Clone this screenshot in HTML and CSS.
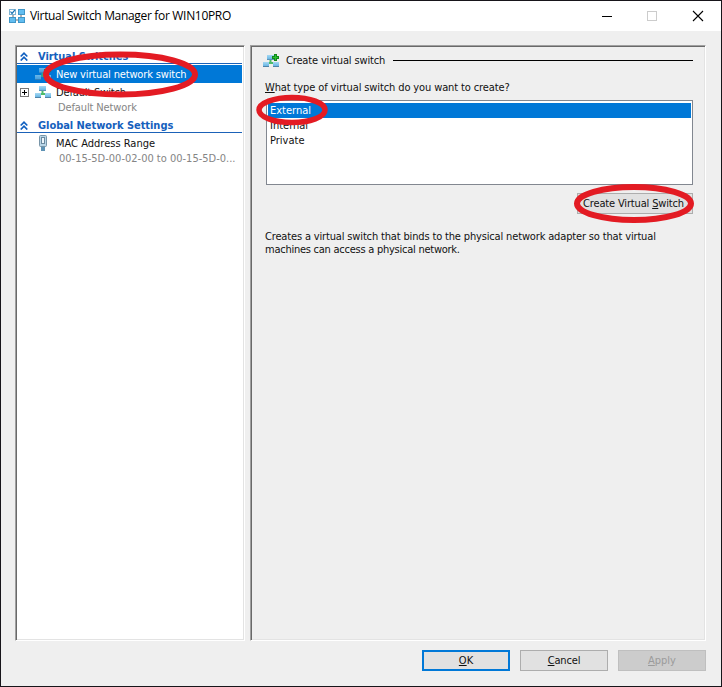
FILE: index.html
```
<!DOCTYPE html>
<html lang="en">
<head>
<meta charset="utf-8">
<title>Virtual Switch Manager for WIN10PRO</title>
<link rel="stylesheet" href="styles.css">
</head>
<body>
<svg class="defs" width="0" height="0">
  <defs>
    <linearGradient id="sky" x2="0" y2="1"><stop offset="0" stop-color="#a5d8f3"/><stop offset="1" stop-color="#5aaee0"/></linearGradient>
    <g id="net">
      <path d="M7.500 5V9M4 9H12" fill="none" stroke="#4dbb6a" stroke-width="2"/>
      <rect x="4" y="1" width="7" height="5" fill="url(#sky)"/>
      <path d="M4 5.500H11" stroke="#5b93b8"/>
      <rect x="0" y="8" width="6" height="5" fill="url(#sky)"/>
      <rect x="10" y="8" width="6" height="5" fill="url(#sky)"/>
      <path d="M0 12.500H6M10 12.500H16" stroke="#4f83a8"/>
      <path d="M6 9H10" stroke="#4dbb6a" stroke-width="2"/>
    </g>
    <g id="plus"><path d="M12.500 0V7M9 3.500H16" stroke="#13891b" stroke-width="3"/><path d="M12.500 1V6M10 3.500H15" stroke="#2cc032" stroke-width="1"/></g>
    <path id="chev" d="M.7 4.500L4 1.200L7.300 4.500M.7 8.500L4 5.200L7.300 8.500" fill="none" stroke="#0f5fc0" stroke-width="1.700"/>
  </defs>
</svg>
<div class="window">
  <header class="titlebar">
    <svg class="app-icon" width="17" height="15" viewBox="0 0 17 15">
      <path d="M4 5V11H12V5" fill="none" stroke="#666"/>
      <rect x=".5" y=".5" width="6" height="5" fill="#fff" stroke="#7fb4d4"/>
      <path d="M1.500 2.500L3 4.500L6 .8" fill="none" stroke="#1673b5" stroke-width="1.200"/>
      <g fill="#62bdf0" stroke="#3f96c8"><rect x="9.500" y=".5" width="6" height="5"/><rect x=".5" y="8.500" width="6" height="5"/><rect x="9.500" y="8.500" width="6" height="5"/></g>
    </svg>
    <h1 class="title">Virtual Switch Manager for WIN10PRO</h1>
    <svg class="controls" width="106" height="12" viewBox="0 0 106 12" fill="none">
      <path d="M0 6.500H10" stroke="#000"/><rect x="45.500" y="1.500" width="9" height="9" stroke="#ccc"/><path d="M91 1L101 11M101 1L91 11" stroke="#000" stroke-width="1.100"/>
    </svg>
  </header>
  <main class="panes">
    <nav class="pane tree">
      <div class="group"><svg width="8" height="9"><use href="#chev"/></svg><span>Virtual Switches</span></div>
      <div class="row selected"><span class="toggle"></span><svg class="dim" width="16" height="14"><use href="#net"/><use href="#plus"/></svg><span class="tight">New virtual network switch</span></div>
      <div class="row"><span class="toggle"><svg width="9" height="9"><rect x=".5" y=".5" width="8" height="8" fill="#fff" stroke="#777"/><path d="M2 4.500H7M4.500 2V7" stroke="#000"/></svg></span><svg width="16" height="14"><use href="#net"/></svg><span class="tight">Default Switch</span></div>
      <div class="detail snug">Default Network</div>
      <div class="group second"><svg width="8" height="9"><use href="#chev"/></svg><span>Global Network Settings</span></div>
      <div class="row"><span class="toggle"></span><svg width="16" height="16"><path d="M8 12V16" stroke="#5f93b5" stroke-width="4"/><rect x="4.500" y=".5" width="7" height="11" rx="1" fill="#b9d5e6" stroke="#7895a8"/><rect x="6.500" y="2.500" width="3" height="6" fill="#eef6fb" stroke="#6b8a9f"/></svg><span>MAC Address Range</span></div>
      <div class="detail addr">00-15-5D-00-02-00 to 00-15-5D-0...</div>
    </nav>
    <section class="pane content">
      <div class="heading"><svg width="17" height="14"><use href="#net"/><use href="#plus"/></svg><span class="tight">Create virtual switch</span><i></i></div>
      <p class="question"><span class="snug"><u>W</u>hat type of virtual switch do you want to create?</span></p>
      <ul class="list"><li class="selected"><span>External</span></li><li><span>Internal</span></li><li><span>Private</span></li></ul>
      <button class="btn create"><span class="tight">Create Virtual <u>S</u>witch</span></button>
      <p class="desc"><span class="tight">Creates a virtual switch that binds to the physical network adapter so that virtual</span><br><span class="tighter">machines can access a physical network.</span></p>
    </section>
  </main>
  <footer class="actions"><button class="btn ok"><span><u>O</u>K</span></button><button class="btn"><span class="tight"><u>C</u>ancel</span></button><button class="btn off" disabled><span><u>A</u>pply</span></button></footer>
</div>
<svg class="marks" width="722" height="687" fill="none" stroke="#e31b23" stroke-width="6">
  <ellipse cx="120.500" cy="74.500" rx="74.500" ry="20"/>
  <ellipse cx="292" cy="110" rx="33" ry="12.500" stroke-width="5.500"/>
  <ellipse cx="634" cy="203.500" rx="57" ry="16.500"/>
</svg>
</body>
</html>
```
FILE: styles.css
```
* { box-sizing: border-box; }
body { margin: 0; font: 11px/13px "DejaVu Sans Condensed", "DejaVu Sans", sans-serif; font-stretch: condensed; color: #111; }
.defs { position: absolute; }
p, ul, h1 { margin: 0; padding: 0; }
span { white-space: nowrap; }
u { text-underline-offset: 1px; }
.snug { letter-spacing: -.12px; }
.tight { letter-spacing: -.155px; }
.tighter { letter-spacing: -.25px; }
.window { width: 722px; height: 687px; border: 1px solid #17151a; background: #efefef; display: flex; flex-direction: column; }
.titlebar { height: 30px; background: #fff; display: flex; align-items: center; padding: 0 16px 0 8px; flex: none; }
.title { font: 12px/16px "Open Sans", sans-serif; letter-spacing: -.32px; margin-left: 4px; color: #000; }
.controls { margin-left: auto; margin-right: -3px; }
.panes { display: flex; gap: 5px; padding: 14px 15px 0 14px; height: 610px; flex: none; }
.pane { border: 1px solid; border-color: #a0a0a0 #fff #fff #a0a0a0; box-shadow: inset 1px 1px #696969, inset -1px -1px #e3e3e3; }
.tree { width: 230px; background: #fff; padding: 1px 2px 2px 1px; }
.content { flex: 1; padding: 7px 12px 0 14px; }
.group { height: 17px; margin-bottom: 1px; border-bottom: 1px solid #1b62b8; display: flex; align-items: center; font-weight: bold; color: #1560bd; padding: 2px 0 0 3px; gap: 10px; letter-spacing: -.04px; }
.row { height: 18px; display: flex; align-items: center; padding-left: 3px; }
.row > svg { margin-right: 5px; }
.toggle { width: 15px; display: flex; }
.selected { background: #0078d7; color: #fff; }
.dim { opacity: .65; }
.detail { height: 15px; line-height: 13px; padding-left: 41px; color: #858585; white-space: nowrap; }
.addr { padding-left: 42px; }
.heading { display: flex; align-items: center; height: 15px; gap: 6px; }
.heading svg { margin-left: -2px; }
.heading i { flex: 1; height: 1px; background: #000; margin-left: 2px; }
.question { margin: 13px 0 6px; }
.list { list-style: none; height: 85px; margin-left: 1px; border: 1px solid #828790; background: #fff; padding: 2px 1px; }
.list li { height: 15px; line-height: 15px; padding-left: 2px; }
.btn { font: inherit; color: #111; height: 21px; padding: 0; background: #e1e1e1; border: 1px solid #adadad; }
.create { display: block; width: 116px; margin: 8px 0 0 auto; padding-right: 3px; }
.desc { margin-top: 16px; }
.actions { display: flex; justify-content: flex-end; gap: 10px; padding: 9px 15px 0 0; }
.actions .btn { width: 88px; }
.actions .ok { border: 2px solid #0078d7; }
.actions .off { background: #ccc; border-color: #bfbfbf; color: #9b9b9b; }
.marks { position: absolute; left: 0; top: 0; pointer-events: none; }
```
